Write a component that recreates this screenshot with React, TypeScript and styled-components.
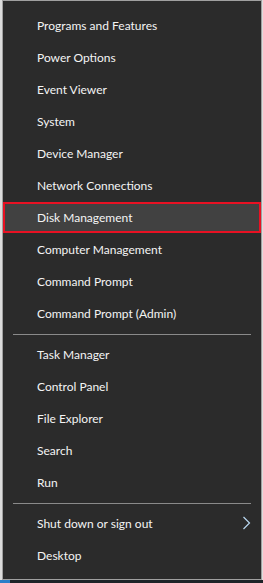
import React from "react";
import styled, { createGlobalStyle } from "styled-components";

const Global = createGlobalStyle`
  html, body { margin: 0; padding: 0; }
  body {
    background: #dcdcdc;
    font-family: "Lato", "Noto Sans", sans-serif;
    width: 263px;
    height: 583px;
    overflow: hidden;
  }
`;

const Page = styled.div`
  display: flex;
  flex-direction: column;
  width: 263px;
  height: 583px;
`;

const Menu = styled.div`
  margin-left: 2px;
  width: 260px;
  box-sizing: border-box;
  border: 1px solid #a0a0a0;
  background: #2b2b2b;
  padding: 8px 0;
  display: flex;
  flex-direction: column;
`;

const Item = styled.div<{ $active?: boolean }>`
  height: ${(p) => (p.$active ? 31 : 32)}px;
  margin-top: ${(p) => (p.$active ? 1 : 0)}px;
  box-sizing: border-box;
  display: flex;
  align-items: center;
  justify-content: space-between;
  padding: 0 10px 0 ${(p) => (p.$active ? 32 : 34)}px;
  color: #f4f4f4;
  font-size: 12px;
  background: ${(p) => (p.$active ? "#414141" : "transparent")};
  border: ${(p) => (p.$active ? "2px solid #e81123" : "none")};
`;

const Label = styled.span`
  white-space: nowrap;
`;

const Separator = styled.div`
  height: 1px;
  background: #8a8a8a;
  margin: 5px 10px 3px 10px;
`;

const Bottom = styled.div`
  height: 3px;
  background: #1e2328;
  display: flex;
`;

const BlueBit = styled.div`
  width: 10px;
  background: #2a7fc9;
`;

const Chevron = () => (
  <svg width="9" height="14" viewBox="0 0 9 14">
    <polyline
      points="1.5,1 7.5,7 1.5,13"
      fill="none"
      stroke="#b9d7f0"
      strokeWidth="1.2"
    />
  </svg>
);

const groups: string[][] = [
  [
    "Programs and Features",
    "Power Options",
    "Event Viewer",
    "System",
    "Device Manager",
    "Network Connections",
    "Disk Management",
    "Computer Management",
    "Command Prompt",
    "Command Prompt (Admin)",
  ],
  ["Task Manager", "Control Panel", "File Explorer", "Search", "Run"],
  ["Shut down or sign out", "Desktop"],
];

export default function App() {
  return (
    <>
      <Global />
      <Page>
        <Menu>
          {groups.map((g, gi) => (
            <React.Fragment key={gi}>
              {gi > 0 && <Separator />}
              {g.map((t) => (
                <Item key={t} $active={t === "Disk Management"}>
                  <Label>{t}</Label>
                  {t === "Shut down or sign out" && <Chevron />}
                </Item>
              ))}
            </React.Fragment>
          ))}
        </Menu>
        <Bottom>
          <BlueBit />
        </Bottom>
      </Page>
    </>
  );
}
